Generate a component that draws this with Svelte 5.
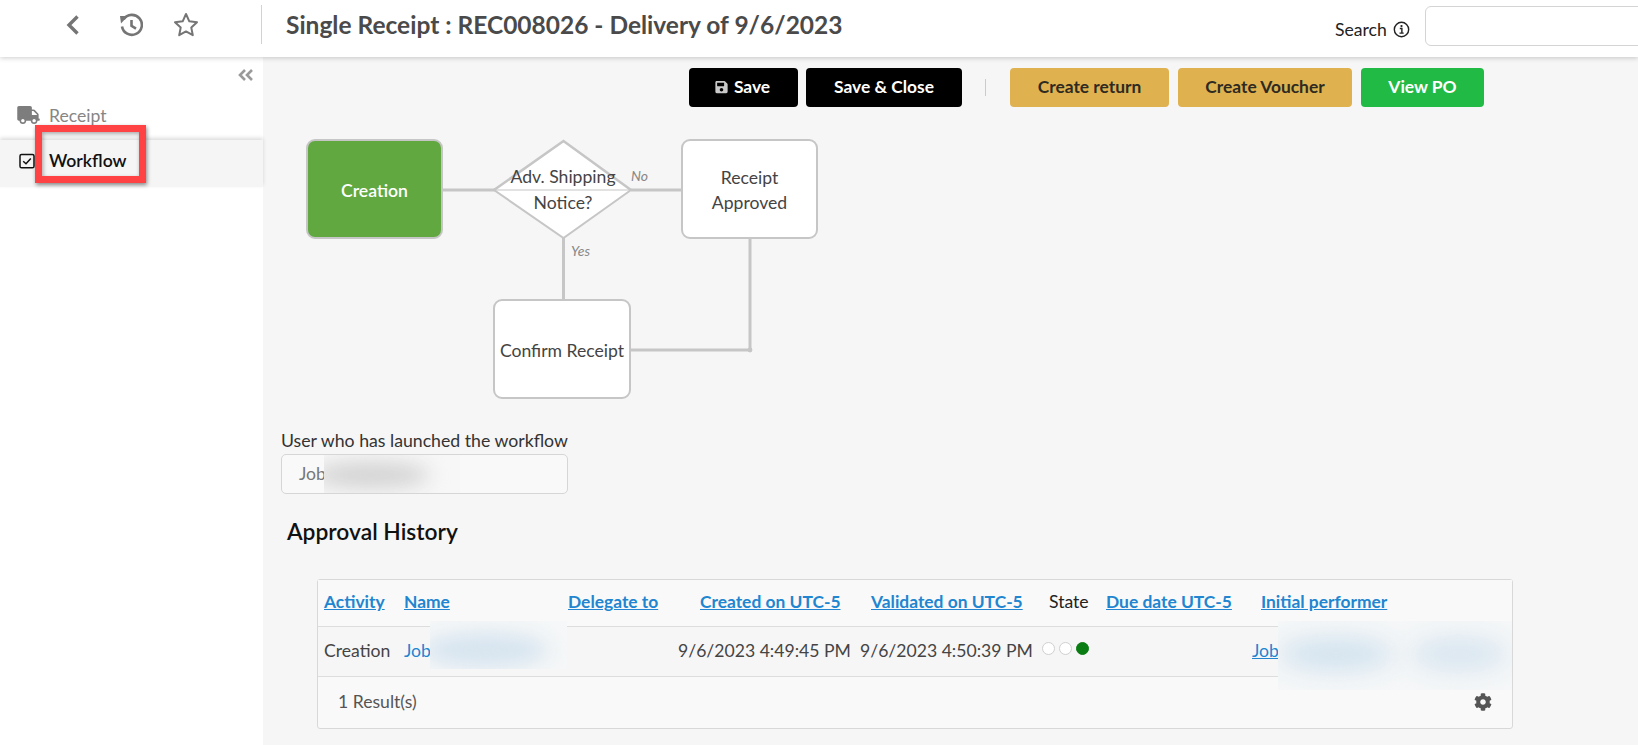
<script>
  const columns = [80, 164, 110, 185, 183, 60, 146, 266];
  const headers = [
    { label: 'Activity', cls: 'h-activity' },
    { label: 'Name', cls: 'h-name' },
    { label: 'Delegate to', cls: 'h-delegate' },
    { label: 'Created on UTC-5', cls: 'h-created' },
    { label: 'Validated on UTC-5', cls: 'h-validated' },
    { label: 'State', cls: 'h-state', plain: true },
    { label: 'Due date UTC-5', cls: 'h-due' },
    { label: 'Initial performer', cls: 'h-initial' }
  ];
</script>

<div class="page">
  <header class="topbar">
    <div class="nav-icons">
      <svg class="ic-back" viewBox="0 0 14 22" width="14" height="22"><polyline points="11.5,2.5 3,11 11.5,19.5" fill="none" stroke="#757575" stroke-width="3.4"/></svg>
      <svg class="ic-history" viewBox="0 0 24 24" width="24" height="24" fill="none" stroke="#757575" stroke-width="2.6">
        <path d="M4.6 6.2A10 10 0 1 1 3 13.5"/>
        <path d="M1 3 L9 3 L2 10.5 Z" fill="#757575" stroke="none"/>
        <polyline points="12.5,7 12.5,12.8 17,15.6"/>
      </svg>
      <svg class="ic-star" viewBox="0 0 26 25" width="26" height="25"><polygon points="13,2 16.3,9.3 24,10.2 18.3,15.6 19.8,23.2 13,19.4 6.2,23.2 7.7,15.6 2,10.2 9.7,9.3" fill="none" stroke="#757575" stroke-width="2" stroke-linejoin="round"/></svg>
    </div>
    <h1 class="title">Single Receipt : REC008026 - Delivery of 9/6/2023</h1>
    <label class="search-label" for="q">Search
      <svg viewBox="0 0 18 18" width="17" height="17" fill="none" stroke="#222"><circle cx="9" cy="9" r="7.6" stroke-width="1.5"/><path d="M7.2 8h2.2v4.6M6.9 12.8h4.4" stroke-width="1.5"/><circle cx="9" cy="5.4" r="1.2" fill="#222" stroke="none"/></svg>
    </label>
    <input id="q" class="search-input" />
  </header>

  <div class="body">
    <aside class="sidebar">
      <div class="collapse">
        <svg viewBox="0 0 16 12" width="16" height="12" fill="none" stroke="#9a9a9a" stroke-width="2.6"><polyline points="7,1 2,6 7,11"/><polyline points="14,1 9,6 14,11"/></svg>
      </div>
      <div class="side-item receipt">
        <svg viewBox="0 0 640 512" width="23" height="18"><path fill="#7d7d7d" d="M624 352h-16V243.9c0-12.7-5.1-24.9-14.1-33.9L494 110.1c-9-9-21.2-14.1-33.9-14.1H416V48c0-26.5-21.5-48-48-48H48C21.5 0 0 21.5 0 48v320c0 26.5 21.5 48 48 48h16c0 53 43 96 96 96s96-43 96-96h128c0 53 43 96 96 96s96-43 96-96h48c8.8 0 16-7.2 16-16v-32c0-8.8-7.2-16-16-16zM160 464c-26.5 0-48-21.5-48-48s21.5-48 48-48 48 21.5 48 48-21.5 48-48 48zm320 0c-26.5 0-48-21.5-48-48s21.5-48 48-48 48 21.5 48 48-21.5 48-48 48zm80-208H416V144h44.1l99.9 99.9V256z"/></svg>
        <span>Receipt</span>
      </div>
      <div class="side-item workflow">
        <svg viewBox="0 0 16 16" width="16" height="16" fill="none" stroke="#111" stroke-width="1.5"><rect x="1" y="1.4" width="14" height="13.4" rx="1.6"/><polyline points="4.2,8.2 7,10.8 11.8,5.4"/></svg>
        <span>Workflow</span>
        <div class="highlight"></div>
      </div>
    </aside>

    <main class="main">
      <div class="toolbar">
        <button class="btn black save">
          <svg viewBox="0 0 448 512" width="13" height="14"><path fill="#c9c9c9" d="M433.941 129.941l-83.882-83.882A48 48 0 0 0 316.118 32H48C21.49 32 0 53.49 0 80v352c0 26.51 21.49 48 48 48h352c26.51 0 48-21.49 48-48V163.882a48 48 0 0 0-14.059-33.941zM224 416c-35.346 0-64-28.654-64-64 0-35.346 28.654-64 64-64s64 28.654 64 64c0 35.346-28.654 64-64 64zm96-304.52V212c0 6.627-5.373 12-12 12H76c-6.627 0-12-5.373-12-12V108c0-6.627 5.373-12 12-12h228.52c3.183 0 6.235 1.264 8.485 3.515l3.48 3.48A11.996 11.996 0 0 1 320 111.48z"/></svg>
          Save
        </button>
        <button class="btn black close">Save &amp; Close</button>
        <span class="sep"></span>
        <button class="btn gold ret">Create return</button>
        <button class="btn gold vou">Create Voucher</button>
        <button class="btn green po">View PO</button>
      </div>

      <div class="diagram">
        <svg class="wires" width="560" height="290" viewBox="0 0 560 290" fill="none" stroke="#c6c6c6" stroke-width="3">
          <line x1="179" y1="60" x2="232" y2="60"/>
          <line x1="368" y1="60" x2="420" y2="60"/>
          <line x1="300.5" y1="108" x2="300.5" y2="170"/>
          <line x1="487" y1="108" x2="487" y2="221"/>
          <line x1="367" y1="220" x2="487" y2="220"/>
          <circle cx="487" cy="220" r="2.4" fill="#c6c6c6" stroke="none"/>
          <polygon points="300.5,11 368,60 300.5,108 231,60" fill="#fff" stroke="none"/>
          <polyline points="231,60 300.5,11 368,60" stroke-width="2.6"/>
          <polyline points="231,60 300.5,108 368,60" stroke-width="2"/>
          <line x1="231" y1="60" x2="368" y2="60" stroke-width="1.2"/>
        </svg>
        <div class="node start">Creation</div>
        <div class="diamond-text">Adv. Shipping<br />Notice?</div>
        <div class="node approved">Receipt<br />Approved</div>
        <div class="node confirm">Confirm Receipt</div>
        <em class="edge no">No</em>
        <em class="edge yes">Yes</em>
      </div>

      <div class="field">
        <label for="launcher">User who has launched the workflow</label>
        <div class="fake-input" id="launcher">
          Job
          <div class="smudge grey"><i></i></div>
        </div>
      </div>

      <h2 class="history">Approval History</h2>

      <div class="grid-wrap">
        <table>
          <colgroup>
            {#each columns as w}<col style="width:{w}px" />{/each}
          </colgroup>
          <thead>
            <tr>
              {#each headers as h}
                <th class={h.cls}>{#if h.plain}{h.label}{:else}<a href="#top">{h.label}</a>{/if}</th>
              {/each}
            </tr>
          </thead>
          <tbody>
            <tr>
              <td class="h-activity">Creation</td>
              <td class="h-name"><span class="link">Job</span></td>
              <td></td>
              <td class="d1">9/6/2023 4:49:45 PM</td>
              <td class="d2">9/6/2023 4:50:39 PM</td>
              <td class="dots"><span class="dot"></span><span class="dot"></span><span class="dot on"></span></td>
              <td></td>
              <td class="perf"><a href="#top">Job</a></td>
            </tr>
          </tbody>
        </table>
        <div class="grid-foot">
          <span>1 Result(s)</span>
          <svg viewBox="0 0 512 512" width="18" height="18"><path fill="#555" d="M487.4 315.7l-42.6-24.6c4.3-23.2 4.3-47 0-70.2l42.6-24.6c4.9-2.8 7.1-8.6 5.5-14-11.1-35.6-30-67.8-54.7-94.6-3.8-4.1-10-5.1-14.8-2.3L380.8 110c-17.9-15.4-38.5-27.3-60.8-35.1V25.8c0-5.6-3.9-10.5-9.4-11.7-36.7-8.2-74.3-7.8-109.2 0-5.5 1.2-9.4 6.1-9.4 11.7V75c-22.2 7.9-42.8 19.8-60.8 35.1L88.7 85.5c-4.9-2.8-11-1.9-14.8 2.3-24.7 26.7-43.6 58.9-54.7 94.6-1.7 5.4.6 11.2 5.5 14L67.3 221c-4.3 23.2-4.3 47 0 70.2l-42.6 24.6c-4.9 2.8-7.1 8.6-5.5 14 11.1 35.6 30 67.8 54.7 94.6 3.8 4.1 10 5.1 14.8 2.3l42.6-24.6c17.9 15.4 38.5 27.3 60.8 35.1v49.2c0 5.6 3.9 10.5 9.4 11.7 36.7 8.2 74.3 7.8 109.2 0 5.5-1.2 9.4-6.1 9.4-11.7v-49.2c22.2-7.9 42.8-19.8 60.8-35.1l42.6 24.6c4.9 2.8 11 1.9 14.8-2.3 24.7-26.7 43.6-58.9 54.7-94.6 1.5-5.5-.7-11.3-5.6-14.1zM256 336c-44.1 0-80-35.9-80-80s35.9-80 80-80 80 35.9 80 80-35.9 80-80 80z"/></svg>
        </div>
        <div class="smudge blue name-blur"><i></i></div>
        <div class="smudge blue perf-blur"><i></i><i></i></div>
      </div>
    </main>
  </div>
</div>

<style>
  :global(body) { margin: 0; background: #f6f6f6; }
  .page {
    width: 1638px; height: 745px; overflow: hidden; display: flex; flex-direction: column;
    font-family: Lato, "Open Sans", sans-serif; color: #333; background: #f6f6f6;
  }
  .topbar {
    height: 57px; flex: none; background: #fff; display: flex; align-items: center;
    box-shadow: 0 1px 5px rgba(0,0,0,.2); position: relative; z-index: 3; box-sizing: border-box;
  }
  .nav-icons {
    width: 262px; height: 39px; box-sizing: border-box; flex: none; display: flex; align-items: center;
    padding-left: 66px; border-right: 1px solid #d2d2d2; margin-top: -8px;
  }
  .ic-history { margin-left: 39px; }
  .ic-star { margin-left: 30px; }
  .title { margin: -8px 0 0 24px; font-size: 24.5px; font-weight: 700; color: #4a4a4a; flex: none; width: 1049px; white-space: nowrap; }
  .search-label { display: flex; align-items: center; gap: 6px; font-size: 17.6px; color: #222; flex: none; width: 90px; margin-top: 2px; white-space: nowrap; }
  .search-input { width: 240px; height: 40px; flex: none; box-sizing: border-box; border: 1px solid #d4d4d4; border-radius: 6px; background: #fff; margin-top: -6px; outline: none; }

  .body { flex: 1; display: flex; min-height: 0; }
  .sidebar { width: 263px; flex: none; background: #fff; display: flex; flex-direction: column; }
  .collapse { display: flex; justify-content: flex-end; padding: 12px 9px 0 0; height: 18px; }
  .side-item { display: flex; align-items: center; font-size: 17.6px; }
  .side-item svg { flex: none; }
  .receipt { height: 34px; padding-left: 17px; box-sizing: border-box; color: #868686; gap: 9px; margin-top: 11px; }
  .workflow {
    height: 47px; box-sizing: border-box; margin-top: 8px; padding: 0 0 6px 19px; gap: 14px; background: #f5f5f5; color: #111;
    position: relative; box-shadow: 0 -2px 4px rgba(0,0,0,.14);
  }
  .workflow span { font-weight: 600; }
  .highlight {
    position: absolute; left: 35px; top: -15px; width: 111px; height: 58px; box-sizing: border-box;
    border: 7px solid #ff4344; box-shadow: 1px 2px 4px rgba(0,0,0,.45), inset 1px 2px 4px rgba(0,0,0,.35);
  }

  .main { flex: 1; min-width: 0; display: flex; flex-direction: column; }
  .toolbar { display: flex; align-items: center; margin: 11px 0 0 426px; height: 39px; }
  .btn {
    height: 39px; border: none; border-radius: 4px; font-family: inherit; font-size: 17.4px; font-weight: 700;
    display: flex; align-items: center; justify-content: center; gap: 6px; padding: 0 0 2px; flex: none;
  }
  .black { background: #000; color: #fff; }
  .gold { background: #dfb24f; color: #2e2a22; }
  .green { background: #21ba45; color: #fff; }
  .save { width: 109px; margin-right: 8px; padding-right: 2px; }
  .close { width: 156px; }
  .sep { width: 1px; height: 17px; background: #cfcac6; margin: 0 24px 0 23px; flex: none; }
  .ret { width: 159px; margin-right: 9px; }
  .vou { width: 174px; margin-right: 9px; }
  .po { width: 123px; }

  .diagram { position: relative; height: 300px; margin-top: 23px; flex: none; font-size: 17.6px; color: #444; }
  .wires { position: absolute; left: 0; top: 0; overflow: visible; }
  .node {
    position: absolute; box-sizing: border-box; width: 137px; height: 100px; background: #fff; border: 2px solid #c6c6c6;
    border-radius: 9px; display: flex; align-items: center; justify-content: center; text-align: center; line-height: 25px; padding-top: 2px;
  }
  .start { left: 43px; top: 9px; background: #62a840; color: #fff; font-weight: 600; }
  .approved { left: 418px; top: 9px; }
  .confirm { left: 230px; top: 169px; width: 138px; }
  .diamond-text { position: absolute; left: 232px; width: 136px; top: 34px; text-align: center; line-height: 26px; }
  .edge { position: absolute; font-size: 14px; color: #888; }
  .no { left: 368px; top: 37px; }
  .yes { left: 308px; top: 112px; }

  .field { margin: 0 0 0 18px; width: 287px; flex: none; }
  .field label { display: block; font-size: 17.7px; color: #333; line-height: 22px; white-space: nowrap; margin-top: 0; }
  .fake-input {
    position: relative; margin-top: 2px; height: 40px; box-sizing: border-box; border: 1px solid #d6d6d6; border-radius: 5px;
    background: #f9f9f9; padding-left: 17px; line-height: 38px; font-size: 17.6px; color: #777; overflow: hidden;
  }
  .history { margin: 20px 0 0 24px; font-size: 22.8px; font-weight: 600; color: #111; line-height: 34px; flex: none; }

  .grid-wrap {
    position: relative; margin: 31px 0 0 54px; width: 1196px; height: 150px; box-sizing: border-box;
    border: 1px solid #d8d8d8; border-radius: 3px; background: #f9f9f9; flex: none;
  }
  table { width: 1194px; border-collapse: collapse; table-layout: fixed; font-size: 17.6px; color: #444; }
  th { height: 46px; padding: 0 0 3px; text-align: left; font-weight: 400; color: #222; border-bottom: 1px solid #ddd; white-space: nowrap; background: #f9f9f9; box-sizing: border-box; }
  td { height: 50px; padding: 0 0 1px; border-bottom: 1px solid #ddd; white-space: nowrap; background: #f6f6f6; box-sizing: border-box; }
  a, .link { color: #2185d0; }
  th a { font-weight: 700; font-size: 17.4px; }
  .h-activity { padding-left: 6px; }
  .h-name { padding-left: 6px; }
  .h-delegate { padding-left: 6px; }
  .h-created { padding-left: 28px; }
  .h-validated { padding-left: 14px; }
  .h-state { padding-left: 9px; }
  .h-due { padding-left: 6px; }
  .h-initial { padding-left: 15px; }
  .d1 { padding-left: 6px; }
  .d2 { padding-left: 3px; }
  .dots { padding-left: 2px; }
  .perf { padding-left: 6px; }
  .dot { display: inline-block; width: 13px; height: 13px; box-sizing: border-box; border: 1px solid #d0d0d0; border-radius: 50%; background: #fff; margin-right: 4px; position: relative; top: -2px; }
  .dot.on { background: #0a7d12; border-color: #0a7d12; }
  .grid-foot { display: flex; align-items: center; justify-content: space-between; height: 51px; padding: 0 20px 1px 20px; box-sizing: border-box; font-size: 17.6px; color: #555; }

  .smudge { position: absolute; overflow: hidden; }
  .smudge i { position: absolute; display: block; border-radius: 50%; filter: blur(10px); }
  .smudge.grey { left: 42px; top: -1px; width: 136px; height: 40px; background: #f7f7f7; }
  .smudge.grey i { left: -12px; top: 8px; width: 118px; height: 26px; background: #d2d2d2; }
  .smudge.blue { background: #f5f7f8; }
  .name-blur { left: 112px; top: 41px; width: 137px; height: 48px; }
  .name-blur i { left: -8px; top: 12px; width: 126px; height: 34px; background: #d6e4ef; }
  .perf-blur { left: 960px; top: 41px; width: 234px; height: 69px; background: #eff4f7; }
  .perf-blur i { left: 0; top: 16px; width: 116px; height: 34px; background: #d3e3ef; filter: blur(12px); }
  .perf-blur i + i { left: 132px; width: 98px; background: #d9e6f0; }
</style>
